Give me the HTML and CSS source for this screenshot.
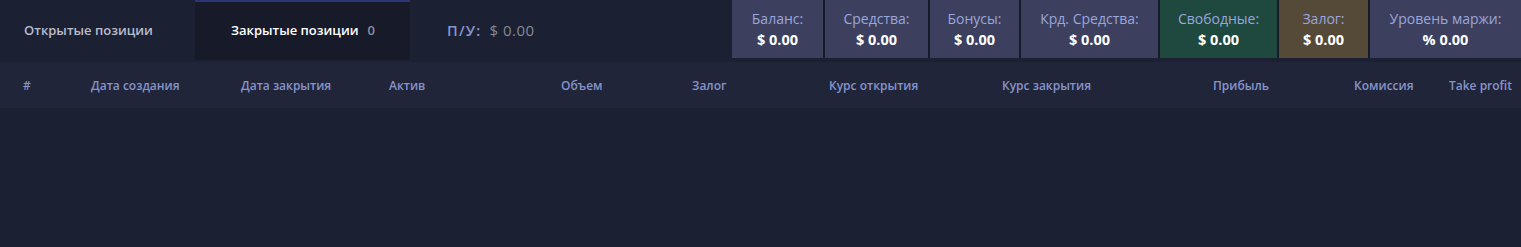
FILE: index.html
```html
<!DOCTYPE html>
<html lang="ru">
<head>
<meta charset="utf-8">
<link rel="stylesheet" href="styles.css">
</head>
<body>
<div class="panel">
  <div class="topbar">
    <div class="tab">Открытые позиции</div>
    <div class="tab active">Закрытые позиции <span class="count">0</span></div>
    <div class="pl"><span class="pl-label">П/У:</span> <span class="pl-value">$ 0.00</span></div>
    <div class="stats">
      <div class="stat"><div class="stat-label">Баланс:</div><div class="stat-value">$ 0.00</div></div>
      <div class="stat"><div class="stat-label">Средства:</div><div class="stat-value">$ 0.00</div></div>
      <div class="stat"><div class="stat-label">Бонусы:</div><div class="stat-value">$ 0.00</div></div>
      <div class="stat"><div class="stat-label">Крд. Средства:</div><div class="stat-value">$ 0.00</div></div>
      <div class="stat green"><div class="stat-label">Свободные:</div><div class="stat-value">$ 0.00</div></div>
      <div class="stat brown"><div class="stat-label">Залог:</div><div class="stat-value">$ 0.00</div></div>
      <div class="stat"><div class="stat-label">Уровень маржи:</div><div class="stat-value">% 0.00</div></div>
    </div>
  </div>
  <div class="thead">
    <div>#</div>
    <div>Дата создания</div>
    <div>Дата закрытия</div>
    <div>Актив</div>
    <div>Объем</div>
    <div>Залог</div>
    <div>Курс открытия</div>
    <div>Курс закрытия</div>
    <div>Прибыль</div>
    <div>Комиссия</div>
    <div>Take profit</div>
  </div>
</div>
</body>
</html>
```

FILE: styles.css
```css
html, body {
  margin: 0;
  padding: 0;
  background: #1c2033;
  height: 100%;
}
body {
  font-family: "Open Sans", "Noto Sans", sans-serif;
  overflow: hidden;
}
.panel {
  width: 1521px;
}
.topbar {
  display: flex;
  align-items: stretch;
  height: 61px;
  background: #1c2033;
}
.tab {
  display: flex;
  align-items: center;
  height: 60px;
  box-sizing: border-box;
  font-size: 13px;
  font-weight: 600;
  color: #b9bccb;
}
.tab:first-child {
  width: 195px;
  padding-left: 24px;
}
.tab.active {
  width: 215px;
  padding-left: 36px;
  background: #171a29;
  color: #ffffff;
  border-top: 2px solid #2b3677;
  padding-bottom: 2px;
}
.count {
  color: #8e919e;
  margin-left: 9px;
  font-weight: 600;
}
.pl {
  display: flex;
  align-items: center;
  height: 60px;
  margin-left: 37px;
  font-weight: 600;
}
.pl-label {
  color: #8796cf;
  font-size: 14.5px;
  letter-spacing: 1.2px;
  margin-right: 8px;
}
.pl-value {
  color: #858995;
  font-weight: 400;
  font-size: 15px;
  letter-spacing: 0.5px;
}
.stats {
  display: grid;
  grid-template-columns: 91px 103px 89px 137px 117px 89px 151px;
  margin-left: auto;
  column-gap: 2px;
  height: 58px;
  background: #161a29;
}
.stat {
  display: flex;
  flex-direction: column;
  align-items: center;
  justify-content: center;
  gap: 2px;
  padding-top: 2px;
  background: #3c405e;
}
.stat.green {
  background: #1f483e;
}
.stat.brown {
  background: #554a38;
}
.stat-label {
  font-size: 14px;
  color: #9aa6dc;
  white-space: nowrap;
  line-height: 18px;
}
.stat-value {
  font-size: 14.5px;
  font-weight: 700;
  color: #ffffff;
  white-space: nowrap;
  line-height: 20px;
}
.thead {
  display: grid;
  grid-template-columns: 68px 150px 148px 172px 131px 137px 173px 211px 141px 95px 1fr;
  align-items: center;
  height: 46px;
  margin-top: 1px;
  padding-left: 23px;
  background: #212539;
  font-size: 12px;
  font-weight: 600;
  color: #8594ca;
  white-space: nowrap;
}
```
